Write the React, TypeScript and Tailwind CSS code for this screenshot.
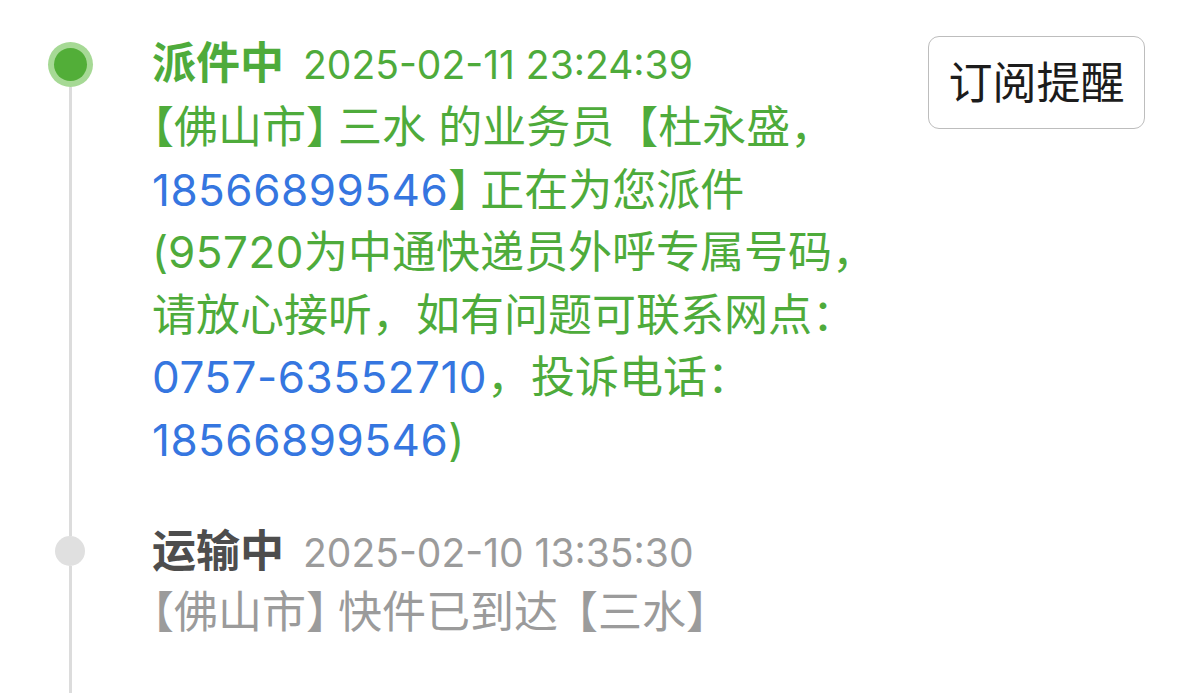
import React from "react";

const FONT = "font-['Inter','Noto_Sans_CJK_SC',sans-serif]";

function RB() {
  return <span className="tracking-[-12px]">】</span>;
}

function Num({ children }: { children: React.ReactNode }) {
  return <span className="text-[#3576e0] tracking-[0.5px]">{children}</span>;
}

export default function App() {
  return (
    <div className={`w-[1179px] h-[693px] overflow-hidden bg-white pt-[32px] pr-[34px] ${FONT}`}>
      {/* Item 1 */}
      <div className="flex">
        <div className="w-[140px] shrink-0 flex flex-col items-center">
          <div className="h-[10px]" />
          <div className="w-[45px] h-[45px] rounded-full bg-[#a6d995] flex items-center justify-center shrink-0">
            <div className="w-[33px] h-[33px] rounded-full bg-[#52ae38]" />
          </div>
          <div className="w-[3px] flex-1 bg-[#dcdcdc]" />
        </div>
        <div className="flex-1 flex pl-[12px] pb-[49px]">
          <div className="flex-1">
            <div className="flex items-baseline h-[62px] leading-[62px]">
              <span className="text-[44px] font-bold text-[#4eab3b]">派件中</span>
              <span className="ml-[19px] text-[39px] text-[#4eab3b]">2025-02-11 23:24:39</span>
            </div>
            <div className="mt-[2px] text-[44px] leading-[62.5px] text-[#4eab3b] whitespace-nowrap [text-spacing-trim:trim-start]">
              【佛山市<RB />三水 的业务员【杜永盛，
              <br />
              <Num>18566899546</Num>
              <RB />正在为您派件
              <br />
              (<span className="tracking-[0.5px]">95720</span>为中通快递员外呼专属号码，
              <br />
              请放心接听，如有问题可联系网点：
              <br />
              <Num>0757-63552710</Num>，投诉电话：
              <br />
              <Num>18566899546</Num>)
            </div>
          </div>
          <div className="shrink-0 mt-[4px]">
            <button className="w-[217px] h-[93px] rounded-[11px] border border-[#bdbdbd] bg-white text-[44px] text-[#1c1c1c] flex items-center justify-center">
              订阅提醒
            </button>
          </div>
        </div>
      </div>
      {/* Item 2 */}
      <div className="flex">
        <div className="w-[140px] shrink-0 flex flex-col items-center">
          <div className="w-[3px] h-[16px] bg-[#dcdcdc]" />
          <div className="w-[30px] h-[30px] rounded-full bg-[#e0e0e0] shrink-0" />
          <div className="w-[3px] flex-1 bg-[#dcdcdc]" />
        </div>
        <div className="flex-1 pl-[12px] pb-[80px]">
          <div className="flex items-baseline h-[62px] leading-[62px]">
            <span className="text-[44px] font-semibold text-[#4d4d4d]">运输中</span>
            <span className="ml-[19px] text-[39px] text-[#9b9b9b]">2025-02-10 13:35:30</span>
          </div>
          <div className="-mt-[1px] text-[44px] leading-[62.5px] text-[#9b9b9b] whitespace-nowrap [text-spacing-trim:trim-start]">
            【佛山市<RB />快件已到达<span className="-ml-[4px]">【</span>三水】
          </div>
        </div>
      </div>
    </div>
  );
}
